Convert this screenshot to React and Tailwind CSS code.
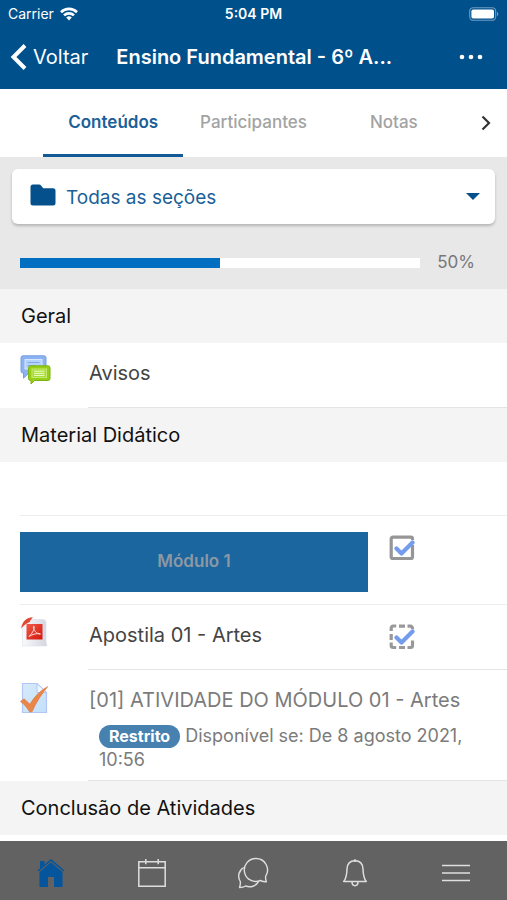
import React, { useState } from 'react'

const TABS = ['Conteúdos', 'Participantes', 'Notas']

const WifiIcon = () => (
  <svg viewBox="0 0 18 14" className="w-[18px] h-[14px]" fill="none" stroke="currentColor" strokeWidth="2.6">
    <path d="M1 5.2a11.4 11.4 0 0 1 16 0" />
    <path d="M4 8.4a7.2 7.2 0 0 1 10 0" />
    <path d="M9 13.4 6.2 10.6a4 4 0 0 1 5.6 0Z" fill="currentColor" stroke="none" />
  </svg>
)

const BatteryIcon = () => (
  <svg viewBox="0 0 30 14" className="w-[30px] h-[14px]">
    <rect x="0.7" y="0.7" width="26" height="12.6" rx="3.6" fill="none" stroke="#6f9cc0" strokeWidth="1.1" />
    <rect x="2.4" y="2.4" width="22.6" height="9.2" rx="1.8" fill="#fff" />
    <path d="M28 4.8c1.8.7 1.8 3.7 0 4.4Z" fill="#6f9cc0" />
  </svg>
)

const FolderIcon = () => (
  <svg viewBox="0 0 26 22" className="w-[26px] h-[22px]" fill="#04508c">
    <path d="M3 .5h6.200c.8 0 1.300.3 1.800.9l1.600 2c.4.6.9.8 1.600.8H23a2.500 2.500 0 0 1 2.500 2.500V19a2.500 2.500 0 0 1-2.500 2.500H3A2.500 2.500 0 0 1 .5 19V3A2.500 2.500 0 0 1 3 .5Z" />
  </svg>
)

const ForumIcon = () => (
  <svg viewBox="0 0 32 30" className="w-8 h-[30px]">
    <path d="M3 .8h21a2 2 0 0 1 2 2V16a2 2 0 0 1-2 2H9l-5.500 5.200V18H3a2 2 0 0 1-2-2V2.800a2 2 0 0 1 2-2Z" fill="#8db2f0" stroke="#759fe8" />
    <rect x="5" y="4.500" width="17" height="9.500" fill="#b5d2fb" stroke="#d5e6ff" />
    <path d="M7.500 7.500h12M7.500 10.500h8" stroke="#7fa9ec" />
    <path d="M10.500 10.800H28a2 2 0 0 1 2 2V23.500a2 2 0 0 1-2 2H14.500L11 29v-3.500h-.5a2 2 0 0 1-2-2V12.800a2 2 0 0 1 2-2Z" fill="#96cf1a" stroke="#7eb30f" />
    <rect x="12" y="14" width="14.500" height="8.500" fill="#a9dd35" stroke="#c6ea70" />
    <path d="M14 16.200h10.500M14 18.300h10.500M14 20.400h10.500" stroke="#f2ffd0" />
  </svg>
)

const PdfIcon = () => (
  <svg viewBox="0 0 28 30" className="w-7 h-[30px]">
    <defs>
      <linearGradient id="pdfPage" x1="0" y1="0" x2="1" y2="0">
        <stop offset="0" stopColor="#fafafc" />
        <stop offset="1" stopColor="#d3d5e0" />
      </linearGradient>
      <linearGradient id="pdfRed" x1="0" y1="0" x2="1" y2="1">
        <stop offset="0" stopColor="#f05a48" />
        <stop offset="1" stopColor="#d3160e" />
      </linearGradient>
    </defs>
    <path d="M11 2.500h12.500a3 3 0 0 1 2.500 3V25l1 4H2.500V11Z" fill="url(#pdfPage)" stroke="#dddfe8" strokeWidth=".6" />
    <path d="M1.200 11.500C2 5.500 5.500.6 13 .3c-1.700 1.800-2.800 3.200-3.200 4.700C6 6.500 3.500 8.500 1.200 11.500Z" fill="#e04a35" />
    <rect x="6.500" y="7" width="16" height="15.500" fill="url(#pdfRed)" />
    <path d="M9 19.500c2.500-2.500 5.500-6.500 5.200-9.800 0-.9-1-.7-.9.300.3 3.500 3.200 6.800 7.200 7-3.500-.9-7.500-.1-11.500 2.500Z" fill="none" stroke="#fbd9d5" strokeWidth="1" />
  </svg>
)

const AssignmentIcon = () => (
  <svg viewBox="0 0 28 32" className="w-7 h-8">
    <defs>
      <linearGradient id="assignPage" x1="0" y1="0" x2="1" y2="1">
        <stop offset="0" stopColor="#d6ebfb" />
        <stop offset="1" stopColor="#c3dffa" />
      </linearGradient>
    </defs>
    <path d="M2.500 1.500H17l9.500 9V30.500h-24Z" fill="url(#assignPage)" stroke="#b4c6f5" strokeWidth="1.200" />
    <path d="M17 1.500v9h9.500Z" fill="#eef7ff" stroke="#b4c6f5" />
    <path d="M.5 19.500 4 16.800l6 5.400C14 15.300 20 8.500 27.800 4.500 22 11.500 16.500 19.500 12 29.800h-2.500C7 25.500 4 22 .5 19.500Z" fill="#e98648" stroke="#d87439" strokeWidth=".6" />
  </svg>
)

const HomeIcon = () => (
  <svg viewBox="0 0 28 28" className="w-7 h-7" fill="#04559b">
    <path d="M14 0 27.500 11.500l-.9 1.100L14 1.900 1.400 12.600l-.9-1.100L3 9.300V2h4.500v3.500Z" />
    <path d="M14 3.200 25.500 13V28H17V18h-6v10H2.500V13Z" />
  </svg>
)

const CalendarIcon = () => (
  <svg viewBox="0 0 28 28" className="w-7 h-7" fill="none" stroke="currentColor" strokeWidth="1.500">
    <path d="M.8 2.800h26.400v24.400H.8ZM.8 8.800h26.400M7.800 0v5.200M20.200 0v5.200" />
  </svg>
)

const ChatIcon = () => (
  <svg viewBox="0 0 32 32" className="w-8 h-8" fill="none" stroke="currentColor" strokeWidth="1.400" strokeLinejoin="round">
    <path d="M19 1.500a11.500 11.500 0 0 1 9.700 17.700c-.3 1.300 0 3.500.6 5.600-2 .1-4-.4-5.800-1.300A11.500 11.500 0 1 1 19 1.500Z" />
    <path d="M6.800 10.500C1.600 13.500.200 19.500 3.300 24.500c.2 2 0 4-.8 6 2.300 0 4.300-.4 6.200-1.500 4.800 1.800 10.300.3 13-4.600" />
  </svg>
)

const BellIcon = () => (
  <svg viewBox="0 0 24 28" className="w-6 h-7" fill="none" stroke="currentColor" strokeWidth="1.500" strokeLinejoin="round">
    <path d="M12 1.700c5 0 7.800 3.400 8 8.300.2 6 .6 9.500 3.300 12.500H.7C3.400 19.500 3.800 16 4 10c.2-4.900 3-8.300 8-8.300Z" />
    <path d="M9 22.800c0 5.200 6 5.200 6 0" />
    <circle cx="12" cy="1.600" r="1.300" fill="currentColor" stroke="none" />
  </svg>
)

const MenuIcon = () => (
  <svg viewBox="0 0 28 18" className="w-7 h-[18px]" fill="none" stroke="currentColor" strokeWidth="1.700">
    <path d="M0 1.500h28M0 9h28M0 16.500h28" />
  </svg>
)

const NAV = [
  { label: 'Início', Icon: HomeIcon },
  { label: 'Calendário', Icon: CalendarIcon },
  { label: 'Mensagens', Icon: ChatIcon },
  { label: 'Notificações', Icon: BellIcon },
  { label: 'Mais', Icon: MenuIcon },
]

// dashed = completion is tracked automatically
const CompletionBox = ({ label, dashed }) => {
  const [done, setDone] = useState(true)

  return (
    <label className="relative block w-[26px] h-[26px] cursor-pointer">
      <input
        type="checkbox"
        aria-label={label}
        checked={done}
        onChange={() => setDone(!done)}
        className="appearance-none block w-full h-full"
      />
      <svg viewBox="0 0 26 26" className="absolute inset-0 pointer-events-none" fill="none">
        {dashed ? (
          <path
            d="M2.200 7V4a2 2 0 0 1 2-2h3M10 2.200h6M18.500 2.200h3a2 2 0 0 1 2 2v1M23.500 16.500v5a2 2 0 0 1-2 2h-3M16 23.500h-6M7.200 23.500h-3a2 2 0 0 1-2-2v-3M2.200 16v-6"
            stroke="#999"
            strokeWidth="3.200"
          />
        ) : (
          <path d="M23.500 5V4a1.800 1.800 0 0 0-1.800-1.800H4A1.800 1.800 0 0 0 2.200 4v17.700A1.800 1.800 0 0 0 4 23.500h17.700a1.800 1.800 0 0 0 1.800-1.800V10" stroke="#969696" strokeWidth="3.200" />
        )}
        {done && <path d="m7.500 13.500 5 5L23.500 7.500" stroke="#739cec" strokeWidth="4.200" strokeLinecap="round" strokeLinejoin="round" />}
      </svg>
    </label>
  )
}

const SectionTitle = ({ children }) => (
  <h2 className="h-[54px] shrink-0 flex items-center px-[21px] bg-[#f4f4f4] text-xl text-[#111]">{children}</h2>
)

const App = () => {
  const [tab, setTab] = useState('Conteúdos')
  const progress = 50

  return (
    <div className="h-screen flex flex-col bg-white font-[Inter,'Liberation_Sans',sans-serif] text-[#444]">
      {/* Header */}
      <header className="shrink-0 bg-[#00508c] text-white">
        <div className="h-7 grid grid-cols-3 items-center px-2 text-sm">
          <div className="flex items-center gap-1.5">
            <span>Carrier</span>
            <WifiIcon />
          </div>
          <span className="text-center font-semibold">5:04 PM</span>
          <div className="flex justify-end">
            <BatteryIcon />
          </div>
        </div>
        <div className="h-[61px] flex items-center pl-2.5 pr-6 pb-1">
          <button className="flex items-center gap-1.5 text-xl">
            <svg viewBox="0 0 17 26" className="w-[17px] h-[26px]" fill="none" stroke="currentColor" strokeWidth="4">
              <path d="M15 1.500 3.500 13 15 24.500" />
            </svg>
            Voltar
          </button>
          <h1 className="flex-1 min-w-0 pl-7 text-xl font-semibold truncate">Ensino Fundamental - 6º A...</h1>
          <button aria-label="Mais opções">
            <svg viewBox="0 0 24 6" className="w-6 h-1.5" fill="currentColor">
              <circle cx="3" cy="3" r="2.300" />
              <circle cx="12" cy="3" r="2.300" />
              <circle cx="21" cy="3" r="2.300" />
            </svg>
          </button>
        </div>
      </header>

      {/* Tabs */}
      <div className="h-[68px] shrink-0 flex pl-[43px]">
        <div role="tablist" className="flex-1 grid grid-cols-3">
          {TABS.map((name) => (
            <button
              key={name}
              role="tab"
              aria-selected={tab === name}
              onClick={() => setTab(name)}
              className={`border-b-3 pt-0.5 text-[17px] ${
                tab === name ? 'border-[#115a96] text-[#1b5f98] font-semibold' : 'border-transparent text-[#a3a3a3] font-medium'
              }`}
            >
              {name}
            </button>
          ))}
        </div>
        <button aria-label="Próximas abas" className="w-[43px] flex items-center justify-center text-[#333]">
          <svg viewBox="0 0 10 16" className="w-2.5 h-4" fill="none" stroke="currentColor" strokeWidth="2.200">
            <path d="m1.500 1.500 6.500 6.500-6.500 6.500" />
          </svg>
        </button>
      </div>

      <main className="flex-1 min-h-0 overflow-hidden">
        {/* Section picker and progress */}
        <div className="bg-[#e8e8e8] px-3 pt-3 h-[132px]">
          <div className="relative">
            <select
              aria-label="Seção"
              className="appearance-none block w-full h-[55px] rounded-md bg-white pl-[54px] pr-10 pt-1 text-[19px] text-[#1b5f98] shadow-[0_2px_3px_rgba(0,0,0,0.22)]"
            >
              <option>Todas as seções</option>
              <option>Geral</option>
              <option>Material Didático</option>
              <option>Conclusão de Atividades</option>
            </select>
            <span className="absolute left-[18px] top-[15px] pointer-events-none">
              <FolderIcon />
            </span>
            <svg viewBox="0 0 14 7" className="absolute right-[15px] top-6 w-3.5 h-[7px] pointer-events-none" fill="#04508c">
              <path d="M0 0h14L7 7Z" />
            </svg>
          </div>
          <div className="flex items-center pl-2 pr-5 pt-[26px]">
            <div role="progressbar" aria-label="Progresso" aria-valuenow={progress} className="flex-1 h-2.5 bg-white">
              <div className="h-full bg-[#006fc2]" style={{ width: `${progress}%` }}></div>
            </div>
            <span className="w-[55px] text-right text-[17px] text-[#777]">{progress}%</span>
          </div>
        </div>

        <SectionTitle>Geral</SectionTitle>
        <div className="flex pl-5">
          <div className="w-[68px] pt-3">
            <ForumIcon />
          </div>
          <a href="#avisos" className="flex-1 h-[65px] flex items-center pb-1 pl-px border-b border-[#e4e4e4] text-xl">
            Avisos
          </a>
        </div>

        <SectionTitle>Material Didático</SectionTitle>
        <div className="ml-5 h-[54px] border-b border-[#ededed]"></div>
        <div className="ml-5 flex items-start border-b border-[#ededed] pt-4 pb-3">
          <div className="flex-1 h-[60px] flex items-center justify-center bg-[#1c66a0] text-[17px] font-semibold text-[#8c98a3]">
            Módulo 1
          </div>
          <div className="w-[139px] pl-[21px] pt-[3px]">
            <CompletionBox label="Módulo 1 concluído" />
          </div>
        </div>
        <div className="flex pl-5">
          <div className="w-[68px] pt-3">
            <PdfIcon />
          </div>
          <div className="flex-1 h-[65px] flex items-center border-b border-[#e4e4e4]">
            <a href="#apostila" className="flex-1 pb-1 pl-px text-xl">Apostila 01 - Artes</a>
            <div className="w-[118px]">
              <CompletionBox label="Apostila 01 concluída" dashed />
            </div>
          </div>
        </div>
        <div className="flex pl-5 h-[111px] text-[#7b7b7b]">
          <div className="w-[68px] pt-3">
            <AssignmentIcon />
          </div>
          <div className="flex-1 pt-4 pl-px pr-8 border-b border-[#e4e4e4]">
            <a href="#atividade" className="block text-xl">[01] ATIVIDADE DO MÓDULO 01 - Artes</a>
            <p className="pl-2.5 pt-2.5 text-lg leading-6">
              <span className="inline-block px-2.5 rounded-full bg-[#4681b0] text-base leading-[23px] font-bold text-white">
                Restrito
              </span>{' '}
              Disponível se: De 8 agosto 2021, 10:56
            </p>
          </div>
        </div>

        <SectionTitle>Conclusão de Atividades</SectionTitle>
      </main>

      {/* Bottom navigation */}
      <nav className="h-[59px] shrink-0 grid grid-cols-5 bg-[#626262] text-[#dedede]">
        {NAV.map(({ label, Icon }) => (
          <button key={label} aria-label={label} className="flex items-center justify-center pt-1">
            <Icon />
          </button>
        ))}
      </nav>
    </div>
  )
}

export default App
